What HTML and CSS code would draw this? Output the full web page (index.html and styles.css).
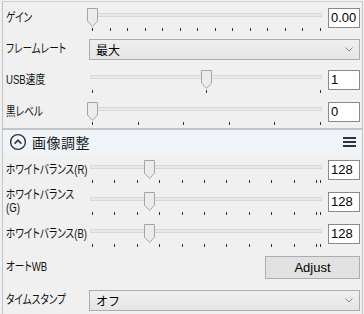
FILE: index.html
```html
<!DOCTYPE html>
<html lang="ja">
<head>
<meta charset="utf-8">
<link rel="stylesheet" href="styles.css">
</head>
<body>
<div class="panel">
  <div class="row">
    <div class="label"><span>ゲイン</span></div>
    <div class="slider">
      <div class="track"></div>
      <div class="ticks"><i></i><i></i><i></i><i></i><i></i><i></i><i></i><i></i><i></i><i></i><i></i><i></i><i></i><i></i></div>
      <svg class="thumb" style="left:1px" width="11" height="19" viewBox="0 0 11 19"><path d="M0.5 0.5H10.5V13L5.5 18.5L0.5 13Z"/></svg>
    </div>
    <div class="value">0.00</div>
  </div>
  <div class="row row-select">
    <div class="label"><span>フレームレート</span></div>
    <div class="select"><span>最大</span><svg width="8" height="5" viewBox="0 0 8 5"><path d="M0.5 0.5L4 4L7.5 0.5"/></svg></div>
  </div>
  <div class="row">
    <div class="label"><span>USB速度</span></div>
    <div class="slider">
      <div class="track"></div>
      <div class="ticks"><i></i><i></i><i></i></div>
      <svg class="thumb" style="left:115px" width="11" height="19" viewBox="0 0 11 19"><path d="M0.5 0.5H10.5V13L5.5 18.5L0.5 13Z"/></svg>
    </div>
    <div class="value">1</div>
  </div>
  <div class="row">
    <div class="label"><span>黒レベル</span></div>
    <div class="slider">
      <div class="track"></div>
      <div class="ticks"><i></i><i></i><i></i><i></i><i></i><i></i></div>
      <svg class="thumb" style="left:1px" width="11" height="19" viewBox="0 0 11 19"><path d="M0.5 0.5H10.5V13L5.5 18.5L0.5 13Z"/></svg>
    </div>
    <div class="value">0</div>
  </div>
</div>
<div class="section">
  <div class="section-head">
    <svg class="collapse" width="18" height="18" viewBox="0 0 18 18"><circle cx="9" cy="9" r="7.4"/><path d="M5.6 10.6L9 7.2L12.4 10.6"/></svg>
    <span class="title">画像調整</span>
    <svg class="menu" width="13" height="12" viewBox="0 0 13 12"><rect x="0" y="1" width="13" height="2"/><rect x="0" y="5" width="13" height="2"/><rect x="0" y="9" width="13" height="2"/></svg>
  </div>
  <div class="row">
    <div class="label"><span>ホワイトバランス(R)</span></div>
    <div class="slider">
      <div class="track"></div>
      <div class="ticks wb"><div class="even"><i></i><i></i><i></i><i></i><i></i><i></i><i></i><i></i><i></i><i></i><i></i></div><i></i></div>
      <svg class="thumb" style="left:58px" width="11" height="19" viewBox="0 0 11 19"><path d="M0.5 0.5H10.5V13L5.5 18.5L0.5 13Z"/></svg>
    </div>
    <div class="value">128</div>
  </div>
  <div class="row">
    <div class="label two"><span>ホワイトバランス<br>(G)</span></div>
    <div class="slider">
      <div class="track"></div>
      <div class="ticks wb"><div class="even"><i></i><i></i><i></i><i></i><i></i><i></i><i></i><i></i><i></i><i></i><i></i></div><i></i></div>
      <svg class="thumb" style="left:58px" width="11" height="19" viewBox="0 0 11 19"><path d="M0.5 0.5H10.5V13L5.5 18.5L0.5 13Z"/></svg>
    </div>
    <div class="value">128</div>
  </div>
  <div class="row">
    <div class="label"><span>ホワイトバランス(B)</span></div>
    <div class="slider">
      <div class="track"></div>
      <div class="ticks wb"><div class="even"><i></i><i></i><i></i><i></i><i></i><i></i><i></i><i></i><i></i><i></i><i></i></div><i></i></div>
      <svg class="thumb" style="left:58px" width="11" height="19" viewBox="0 0 11 19"><path d="M0.5 0.5H10.5V13L5.5 18.5L0.5 13Z"/></svg>
    </div>
    <div class="value">128</div>
  </div>
  <div class="row row-button">
    <div class="label"><span>オートWB</span></div>
    <div class="button">Adjust</div>
  </div>
  <div class="row row-select">
    <div class="label"><span>タイムスタンプ</span></div>
    <div class="select"><span>オフ</span><svg width="8" height="5" viewBox="0 0 8 5"><path d="M0.5 0.5L4 4L7.5 0.5"/></svg></div>
  </div>
</div>
</body>
</html>
```

FILE: styles.css
```css
html, body {
  margin: 0;
  padding: 0;
  background: #f0f0f0;
}
body {
  font-family: "Noto Sans CJK JP", "Noto Sans", sans-serif;
  font-size: 12px;
  color: #000;
  overflow: hidden;
}
.panel {
  margin: 1px 1px 0 2px;
  border: 1px solid #c4c4c4;
  border-top-color: #d0d0d0;
}
.section {
  margin: 0 1px 0 2px;
  border: 1px solid #c4c4c4;
}
.row {
  display: grid;
  grid-template-columns: 83px 240px 1fr;
  align-items: center;
  height: 32px;
}
.row-select {
  grid-template-columns: 83px 1fr;
  height: 30px;
}
.section .row-select {
  height: 32px;
}
.row-button {
  grid-template-columns: 83px 1fr;
  height: 34px;
}
.label {
  padding-left: 3px;
  white-space: nowrap;
  line-height: 14px;
  font-family: "Liberation Sans", "Noto Sans CJK JP", sans-serif;
  font-size: 12.5px;
  color: #111;
}
.label span {
  display: inline-block;
  font-feature-settings: "palt";
  transform: scaleX(0.77);
  transform-origin: left center;
}
.label.two {
  line-height: 13px;
  margin-top: -1px;
}
.slider {
  position: relative;
  height: 32px;
}
.track {
  margin: 11px 4px 0 4px;
  height: 2px;
  background: #e7eaea;
  border: 1px solid #d9d9d9;
}
.ticks {
  display: flex;
  justify-content: space-between;
  margin: 11px 0 0 6px;
  width: 229px;
  height: 3px;
}
.ticks i {
  display: block;
  width: 1px;
  height: 3px;
  background: #333;
}
.ticks.wb .even {
  display: flex;
  justify-content: space-between;
  width: 225px;
}
.thumb {
  position: absolute;
  top: 6px;
}
.thumb path {
  fill: #ececec;
  stroke: #a5a5a5;
  stroke-width: 1;
}
.value {
  margin-left: 2px;
  width: 30px;
  height: 18px;
  border: 1px solid #8a8a8a;
  background: #fff;
  font-family: "Liberation Sans", Arial, sans-serif;
  font-size: 13px;
  line-height: 18px;
  text-indent: 2px;
}
.select {
  margin: 0 2px 0 3px;
  height: 19px;
  border: 1px solid #acacac;
  background: linear-gradient(#efefef, #e6e6e6);
  display: flex;
  align-items: center;
  justify-content: space-between;
  padding: 0 6px 0 6px;
}
.select span {
  font-size: 12px;
}
.select svg path {
  fill: none;
  stroke: #8a8a8a;
  stroke-width: 1;
}
.button {
  justify-self: end;
  margin-right: 2px;
  width: 93px;
  height: 21px;
  border: 1px solid #adadad;
  background: #e1e1e1;
  font-family: "Liberation Sans", Arial, sans-serif;
  font-size: 13px;
  line-height: 21px;
  text-align: center;
}
.section-head {
  display: flex;
  align-items: center;
  height: 24px;
  background: #eef4fa;
  padding: 0 6px 0 6px;
}
.collapse circle {
  fill: none;
  stroke: #333;
  stroke-width: 1.4;
}
.collapse path {
  fill: none;
  stroke: #333;
  stroke-width: 1.6;
}
.title {
  margin-left: 5px;
  font-size: 14px;
  letter-spacing: 0.5px;
  color: #1a1a1a;
}
.menu {
  margin-left: auto;
  fill: #333;
}
```
